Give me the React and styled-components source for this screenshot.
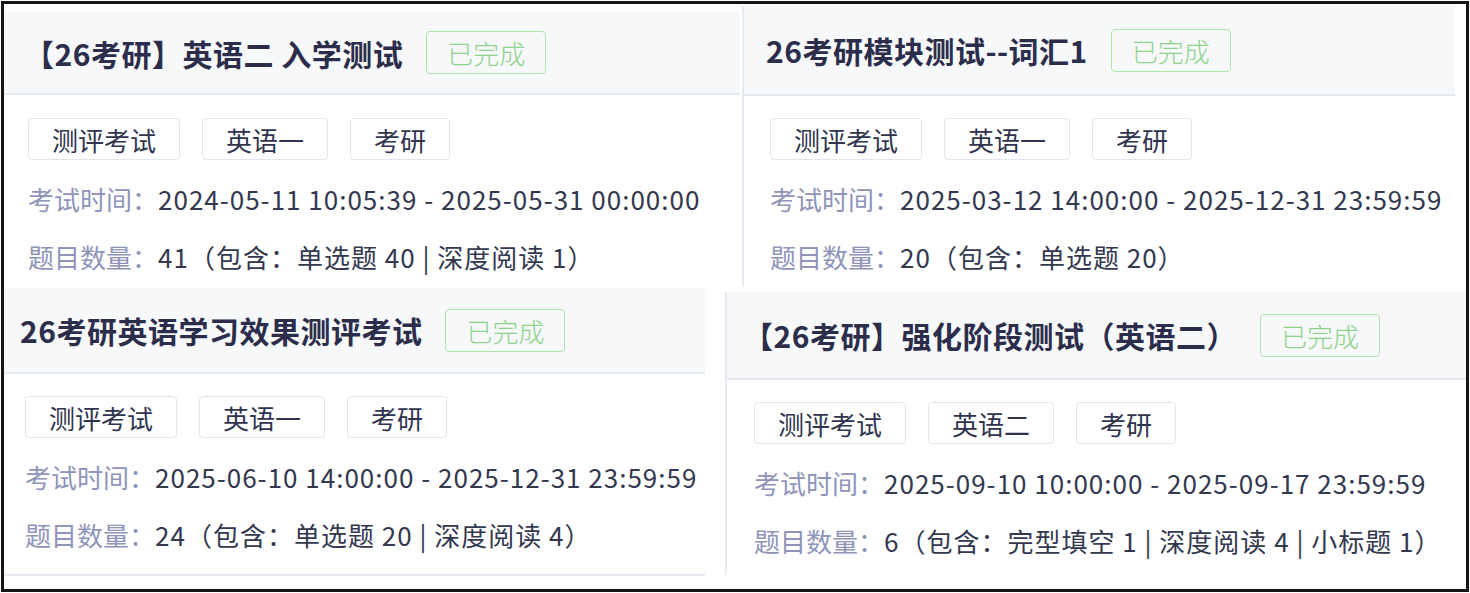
import styled, { createGlobalStyle } from "styled-components";

const GlobalStyle = createGlobalStyle`
  html, body {
    margin: 0;
    padding: 0;
    background: #fff;
  }
  body {
    font-family: "Noto Sans CJK SC", "Noto Sans", sans-serif;
  }
`;

const exams = [
  {
    title: "【26考研】英语二 入学测试",
    tags: ["测评考试", "英语一", "考研"],
    time: "2024-05-11 10:05:39 - 2025-05-31 00:00:00",
    count: "41（包含：单选题 40 | 深度阅读 1）",
    box: { w: 736, mt: 8, ml: 0, head: 81, titleX: 20, bodyX: 24, pt: 23, pb: 1 },
  },
  {
    title: "26考研模块测试--词汇1",
    tags: ["测评考试", "英语一", "考研"],
    time: "2025-03-12 14:00:00 - 2025-12-31 23:59:59",
    count: "20（包含：单选题 20）",
    box: { w: 713, mt: 2, ml: 2, head: 88, titleX: 22, bodyX: 26, pt: 22, pb: 1, edge: true },
  },
  {
    title: "26考研英语学习效果测评考试",
    tags: ["测评考试", "英语一", "考研"],
    time: "2025-06-10 14:00:00 - 2025-12-31 23:59:59",
    count: "24（包含：单选题 20 | 深度阅读 4）",
    box: { w: 701, mt: 1, ml: 0, head: 84, titleX: 16, bodyX: 21, pt: 22, pb: 10, foot: true },
  },
  {
    title: "【26考研】强化阶段测试（英语二）",
    tags: ["测评考试", "英语二", "考研"],
    time: "2025-09-10 10:00:00 - 2025-09-17 23:59:59",
    count: "6（包含：完型填空 1 | 深度阅读 4 | 小标题 1）",
    box: { w: 741, mt: 5, ml: 20, head: 86, titleX: 16, bodyX: 27, pt: 22, pb: 5, edge: true },
  },
];

const ExamCard = ({ exam }) => {
  const b = exam.box;
  return (
    <Card $w={b.w} $mt={b.mt} $ml={b.ml} $edge={b.edge} $foot={b.foot}>
      <Header $h={b.head} $x={b.titleX}>
        <Title>{exam.title}</Title>
        <Status>已完成</Status>
      </Header>
      <Body $x={b.bodyX} $pt={b.pt} $pb={b.pb}>
        <Tags>
          {exam.tags.map((t) => (
            <Tag key={t}>{t}</Tag>
          ))}
        </Tags>
        <InfoRow>
          <Label>考试时间：</Label>
          <Value>{exam.time}</Value>
        </InfoRow>
        <InfoRow>
          <Label>题目数量：</Label>
          <Value>{exam.count}</Value>
        </InfoRow>
      </Body>
    </Card>
  );
};

const App = () => {
  return (
    <>
      <GlobalStyle />
      <Frame>
        <Row>
          <ExamCard exam={exams[0]} />
          <ExamCard exam={exams[1]} />
        </Row>
        <Row>
          <ExamCard exam={exams[2]} />
          <ExamCard exam={exams[3]} />
        </Row>
      </Frame>
    </>
  );
};

const Frame = styled.div`
  box-sizing: border-box;
  width: 1468px;
  height: 591px;
  margin: 1px;
  border: 3px solid #151515;
  overflow: hidden;
  background: #fff;
`;

const Row = styled.div`
  display: flex;
  align-items: flex-start;
`;

const Card = styled.section`
  box-sizing: border-box;
  flex: none;
  width: ${(p) => p.$w}px;
  margin-top: ${(p) => p.$mt}px;
  margin-left: ${(p) => p.$ml}px;
  border-left: ${(p) => (p.$edge ? "2px solid #e6ebf2" : "none")};
  border-bottom: ${(p) => (p.$foot ? "2px solid #e6ebf2" : "none")};
  background: #fff;
`;

const Header = styled.div`
  display: flex;
  align-items: center;
  height: ${(p) => p.$h}px;
  padding-left: ${(p) => p.$x}px;
  background: #f7f8fa;
  border-bottom: 2px solid #e6ebf2;
`;

const Title = styled.h3`
  margin: 0;
  font-size: 30px;
  font-weight: 700;
  letter-spacing: 0.5px;
  color: #2b2d4b;
  white-space: nowrap;
`;

const Status = styled.span`
  box-sizing: border-box;
  display: inline-flex;
  align-items: center;
  height: 43px;
  margin-left: 23px;
  padding: 0 20px;
  border: 1.5px solid #aee3a8;
  border-radius: 4px;
  font-size: 26px;
  font-weight: 300;
  color: #8ed38a;
  background: transparent;
`;

const Body = styled.div`
  padding: ${(p) => p.$pt}px ${(p) => p.$x}px ${(p) => p.$pb}px;
`;

const Tags = styled.div`
  display: flex;
  gap: 22px;
  margin-bottom: 10px;
`;

const Tag = styled.span`
  box-sizing: border-box;
  display: inline-flex;
  align-items: center;
  height: 42px;
  padding: 0 23px;
  border: 1.5px solid #e2e5eb;
  border-radius: 4px;
  font-size: 26px;
  color: #30344e;
  background: #fff;
`;

const InfoRow = styled.div`
  height: 58px;
  line-height: 58px;
  font-size: 26px;
  white-space: nowrap;
`;

const Label = styled.span`
  color: #8f94ba;
`;

const Value = styled.span`
  color: #33384f;
  letter-spacing: 1px;
`;

export default App;
